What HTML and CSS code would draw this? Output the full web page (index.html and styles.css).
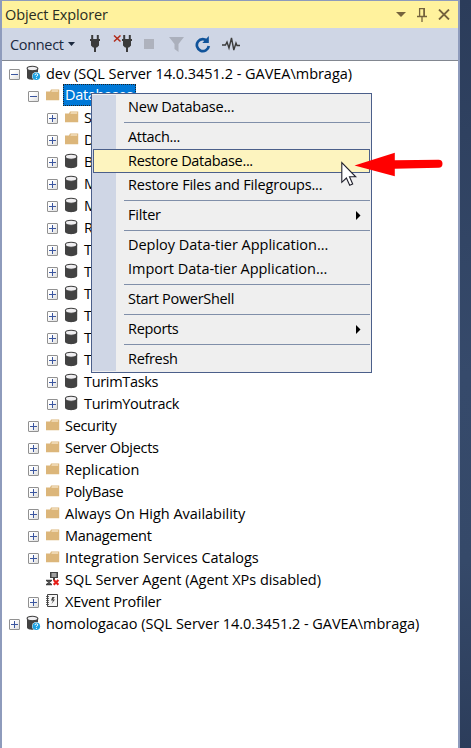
FILE: index.html
```
<!DOCTYPE html>
<html lang="en">
<head>
<meta charset="utf-8">
<title>Object Explorer</title>
<link rel="stylesheet" href="styles.css">
</head>
<body>
<svg class="defs" aria-hidden="true">
  <linearGradient id="box" x1="0" y1="0" x2="1" y2="1"><stop offset=".3" stop-color="#fff"/><stop offset="1" stop-color="#dcdcdc"/></linearGradient>
  <symbol id="minus" viewBox="0 0 11 11"><rect x=".5" y=".5" width="10" height="10" rx=".5" fill="url(#box)" stroke="#919191"/><path d="M2 5.5h7" stroke="#3b56a0"/></symbol>
  <symbol id="plus" viewBox="0 0 11 11"><rect x=".5" y=".5" width="10" height="10" rx=".5" fill="url(#box)" stroke="#919191"/><path d="M2 5.5h7M5.500 2v7" stroke="#3b56a0"/></symbol>
  <symbol id="folder" viewBox="0 0 16 16"><path d="M1 4.500h4l1-2h8.200v10.700H1z" fill="#dcb67a"/><path d="M6.300 4.500l.6-1h6.300v1z" fill="#fff5e4"/></symbol>
  <symbol id="db" viewBox="0 0 16 16"><path d="M1 3.500v9C1 16 13.200 16 13.200 12.500v-9z" fill="#424242"/><ellipse cx="7.100" cy="3.700" rx="5.700" ry="2.500" fill="#f0eff1" stroke="#424242" stroke-width="1.100"/></symbol>
  <symbol id="server" viewBox="0 0 16 16"><path d="M1 3v9.500C1 15.500 12 15.500 12 12.500V3z" fill="#424242"/><ellipse cx="6.500" cy="3.500" rx="5.400" ry="2.200" fill="#f0eff1" stroke="#424242" stroke-width="1.100"/><circle cx="10.300" cy="11.300" r="4.300" fill="#fff"/><circle cx="10.300" cy="11.300" r="3.800" fill="#1ba1e2"/><path d="M9 10.200q0-1.400 1.400-1.400t1.300 1.200q0 .7-1.300 1.500v.6M10.400 13v1" fill="none" stroke="#fff" stroke-width="1"/></symbol>
  <symbol id="agent" viewBox="0 0 16 16"><path d="M5 1h8v6H5z" fill="#424242"/><path d="M6.500 3h5M6.500 5h5" stroke="#fff"/><path d="M9 7v2" stroke="#424242" stroke-width="2"/><path d="M1 9.500h6M1 13.500h6M2.200 10l3.600 3M5.800 10l-3.600 3" stroke="#424242" stroke-width="1.300"/><path d="M8.700 9l4.700 4.700M13.400 9l-4.700 4.700" stroke="#e51d18" stroke-width="2.200"/></symbol>
  <symbol id="xevent" viewBox="0 0 16 16"><path d="M2.500 1.500h10v12h-10z" fill="#f6f6f6" stroke="#424242"/><path d="M1 3.500h3M1 5.500h3M1 7.500h3M1 9.500h3M1 11.500h3" stroke="#424242" stroke-width=".8"/><path d="M9.800 4H7.300L6 7.500h2L6.500 11 10 6.500H8z" fill="#424242"/></symbol>
  <symbol id="plug" viewBox="0 0 12 18"><path d="M2.200 0h2v5h-2zM7.800 0h2v5h-2zM1 4h10v2H1zM2 6h8v4.500L8 12.500H4L2 10.500zM5 12h2v5H5z" fill="#3b3b3b"/></symbol>
</svg>

<main class="panel">
  <header class="title">
    <h1>Object Explorer</h1>
    <div class="window-tools">
      <svg width="10" height="5"><path d="M0 0h10L5 5z" fill="#75633d"/></svg>
      <svg class="pin" width="10" height="14"><path d="M2 .7h6M2.600 0v8M0 8.500h10M5 9v5" fill="none" stroke="#75633d" stroke-width="1.300"/><path d="M6.200 0H8v8.500H6.200z" fill="#75633d"/></svg>
      <svg class="close" width="12" height="11"><path d="M1 .5l10 10M11 .5l-10 10" stroke="#75633d" stroke-width="1.800"/></svg>
    </div>
  </header>
  <nav class="toolbar">
    <span class="connect">Connect</span>
    <svg class="drop" width="8" height="4"><path d="M0 0h7L3.500 4z" fill="#1b293e"/></svg>
    <svg class="connect-icon" width="12" height="18"><use href="#plug"/></svg>
    <svg class="disconnect-icon" width="20" height="18"><use href="#plug" x="8" width="12" height="18"/><path d="M1 .5l6.500 6M7.500.5L1 6.500" stroke="#b22c1b" stroke-width="1.500"/></svg>
    <svg class="stop" width="10" height="10"><path d="M0 0h10v10H0z" fill="#aeb2bd"/></svg>
    <svg class="filter" width="15" height="15"><path d="M0 0h15L9.500 7v8l-4-3V7z" fill="#abb0bc"/></svg>
    <svg class="refresh" width="16" height="17"><path d="M12.500 5.300A6 6 0 1 0 13.800 10" fill="none" stroke="#10539a" stroke-width="2.700"/><path d="M13.800 0v7H7.300z" fill="#10539a"/></svg>
    <svg class="activity" width="18" height="14"><path d="M0 8h3.500L5 5l2 6L9.500 1l2.300 12L14 6l1 2.500h3" fill="none" stroke="#3b3b3b" stroke-width="1.400"/></svg>
  </nav>

  <ul class="tree">
    <li class="row l0"><svg class="exp"><use href="#minus"/></svg><svg class="ico"><use href="#server"/></svg><span class="loose">dev (SQL Server 14.0.3451.2 - GAVEA\mbraga)</span></li>
    <li class="row l1"><svg class="exp"><use href="#minus"/></svg><svg class="ico"><use href="#folder"/></svg><span class="selected">Databases</span></li>
    <li class="row l2"><svg class="exp"><use href="#plus"/></svg><svg class="ico"><use href="#folder"/></svg><span>S</span></li>
    <li class="row l2"><svg class="exp"><use href="#plus"/></svg><svg class="ico"><use href="#folder"/></svg><span>D</span></li>
    <li class="row l2"><svg class="exp"><use href="#plus"/></svg><svg class="ico"><use href="#db"/></svg><span>B</span></li>
    <li class="row l2"><svg class="exp"><use href="#plus"/></svg><svg class="ico"><use href="#db"/></svg><span>M</span></li>
    <li class="row l2"><svg class="exp"><use href="#plus"/></svg><svg class="ico"><use href="#db"/></svg><span>M</span></li>
    <li class="row l2"><svg class="exp"><use href="#plus"/></svg><svg class="ico"><use href="#db"/></svg><span>R</span></li>
    <li class="row l2"><svg class="exp"><use href="#plus"/></svg><svg class="ico"><use href="#db"/></svg><span>T</span></li>
    <li class="row l2"><svg class="exp"><use href="#plus"/></svg><svg class="ico"><use href="#db"/></svg><span>T</span></li>
    <li class="row l2"><svg class="exp"><use href="#plus"/></svg><svg class="ico"><use href="#db"/></svg><span>T</span></li>
    <li class="row l2"><svg class="exp"><use href="#plus"/></svg><svg class="ico"><use href="#db"/></svg><span>T</span></li>
    <li class="row l2"><svg class="exp"><use href="#plus"/></svg><svg class="ico"><use href="#db"/></svg><span>T</span></li>
    <li class="row l2"><svg class="exp"><use href="#plus"/></svg><svg class="ico"><use href="#db"/></svg><span>T</span></li>
    <li class="row l2"><svg class="exp"><use href="#plus"/></svg><svg class="ico"><use href="#db"/></svg><span>TurimTasks</span></li>
    <li class="row l2"><svg class="exp"><use href="#plus"/></svg><svg class="ico"><use href="#db"/></svg><span>TurimYoutrack</span></li>
    <li class="row l1"><svg class="exp"><use href="#plus"/></svg><svg class="ico"><use href="#folder"/></svg><span>Security</span></li>
    <li class="row l1"><svg class="exp"><use href="#plus"/></svg><svg class="ico"><use href="#folder"/></svg><span>Server Objects</span></li>
    <li class="row l1"><svg class="exp"><use href="#plus"/></svg><svg class="ico"><use href="#folder"/></svg><span class="loose">Replication</span></li>
    <li class="row l1"><svg class="exp"><use href="#plus"/></svg><svg class="ico"><use href="#folder"/></svg><span>PolyBase</span></li>
    <li class="row l1"><svg class="exp"><use href="#plus"/></svg><svg class="ico"><use href="#folder"/></svg><span class="loose">Always On High Availability</span></li>
    <li class="row l1"><svg class="exp"><use href="#plus"/></svg><svg class="ico"><use href="#folder"/></svg><span>Management</span></li>
    <li class="row l1"><svg class="exp"><use href="#plus"/></svg><svg class="ico"><use href="#folder"/></svg><span class="loose">Integration Services Catalogs</span></li>
    <li class="row l1"><svg class="exp"></svg><svg class="ico"><use href="#agent"/></svg><span class="loose">SQL Server Agent (Agent XPs disabled)</span></li>
    <li class="row l1"><svg class="exp"><use href="#plus"/></svg><svg class="ico"><use href="#xevent"/></svg><span class="medium">XEvent Profiler</span></li>
    <li class="row l0"><svg class="exp"><use href="#plus"/></svg><svg class="ico"><use href="#server"/></svg><span class="loose">homologacao (SQL Server 14.0.3451.2 - GAVEA\mbraga)</span></li>
  </ul>
</main>

<div class="menu">
  <div class="item"><span class="medium">New Database...</span></div>
  <hr>
  <div class="item"><span>Attach...</span></div>
  <div class="item active"><span>Restore Database...</span></div>
  <div class="item"><span class="medium">Restore Files and Filegroups...</span></div>
  <hr>
  <div class="item"><span class="medium">Filter</span><svg width="5" height="9"><path d="M0 0l4.500 4.500L0 9z"/></svg></div>
  <hr>
  <div class="item"><span class="loose">Deploy Data-tier Application...</span></div>
  <div class="item"><span class="loose">Import Data-tier Application...</span></div>
  <hr>
  <div class="item"><span>Start PowerShell</span></div>
  <hr>
  <div class="item"><span>Reports</span><svg width="5" height="9"><path d="M0 0l4.500 4.500L0 9z"/></svg></div>
  <hr>
  <div class="item"><span>Refresh</span></div>
</div>

<svg class="pointer" width="105" height="38">
  <path d="M14.500 15.500L54.800 2.800V10.300L98.500 9.700a4 4 0 0 1 0 8L54.800 18.700V26.200z" fill="#f00"/>
  <path d="M1.800 12.500v19.800l4.600-4.300 3.300 7.300 3-1.300-3.200-7.200h6.200z" fill="#fff" stroke="#20202c" stroke-width="1.100"/>
</svg>
</body>
</html>
```
FILE: styles.css
```
* { box-sizing: border-box; }
body {
  margin: 0;
  width: 471px;
  height: 748px;
  overflow: hidden;
  background: linear-gradient(#2b3c5a, #364a6b 50%, #354969 75%, #2c3d5b);
  font-family: "Open Sans", "Noto Sans", sans-serif;
  font-size: 14.5px;
  letter-spacing: -0.32px;
  color: #000;
}
svg { display: block; flex: none; }
.loose { letter-spacing: -0.03px; }
.medium { letter-spacing: -0.2px; }
.defs { position: absolute; width: 0; height: 0; }
.panel {
  width: 460px;
  height: 748px;
  border: solid #8e9bbc;
  border-width: 1px 2px 0;
  display: flex;
  flex-direction: column;
}
.title {
  height: 27px;
  background: #fff29d;
  display: flex;
  align-items: center;
  justify-content: space-between;
  padding: 0 8px 0 3px;
}
h1 { margin: 0; font-size: 14.5px; font-weight: 400; line-height: 26px; letter-spacing: -0.13px; color: #2a2d22; }
.window-tools { display: flex; align-items: center; }
.pin { margin-left: 11px; }
.close { margin-left: 11px; }
.toolbar {
  height: 33px;
  background: #cfd6e5;
  border-bottom: 1px solid #828790;
  display: flex;
  align-items: center;
  padding-left: 8px;
  color: #1b293e;
}
.connect { width: 54px; }
.drop { margin-left: 4px; }
.connect-icon { margin-left: 13px; }
.disconnect-icon { margin-left: 12px; }
.stop { margin-left: 11px; }
.filter { margin-left: 15px; }
.refresh { margin-left: 11px; }
.activity { margin-left: 11px; }
.tree {
  list-style: none;
  margin: 0;
  padding: 1px 0 0;
  flex: 1;
  background: #fff;
}
.row { display: flex; height: 22px; align-items: center; line-height: 21px; white-space: nowrap; }
.l0 { padding-left: 7px; }
.l1 { padding-left: 26px; }
.l2 { padding-left: 45px; }
.exp { width: 11px; height: 11px; position: relative; top: 1.5px; }
.ico { width: 16px; height: 16px; margin: 0 4px 0 6px; }
.selected {
  width: 73px;
  height: 22px;
  margin-left: -2px;
  padding-left: 1px;
  border: 1px dotted #222;
  background: #0078d7;
  color: #fff;
  line-height: 19px;
}
.menu {
  position: absolute;
  left: 91px;
  top: 93px;
  width: 281px;
  height: 280px;
  padding: 1px;
  border: 1px solid #4b5f8a;
  background: #efefef linear-gradient(#cfd6e5, #cfd6e5) 0 1px / 24px 276px no-repeat;
}
.item {
  height: 24px;
  display: flex;
  align-items: center;
  justify-content: space-between;
  padding: 0 9px 2px 35px;
  line-height: 21px;
  white-space: nowrap;
}
.item svg { margin-top: 3px; }
.item.active { border: 1px solid #4b5f8a; background: #fdf4bf; padding-left: 34px; }
.menu hr { height: 1px; margin: 3px 0 2px 31px; border: 0; background: #808fa9; }
.pointer { position: absolute; left: 340px; top: 150px; }
```
